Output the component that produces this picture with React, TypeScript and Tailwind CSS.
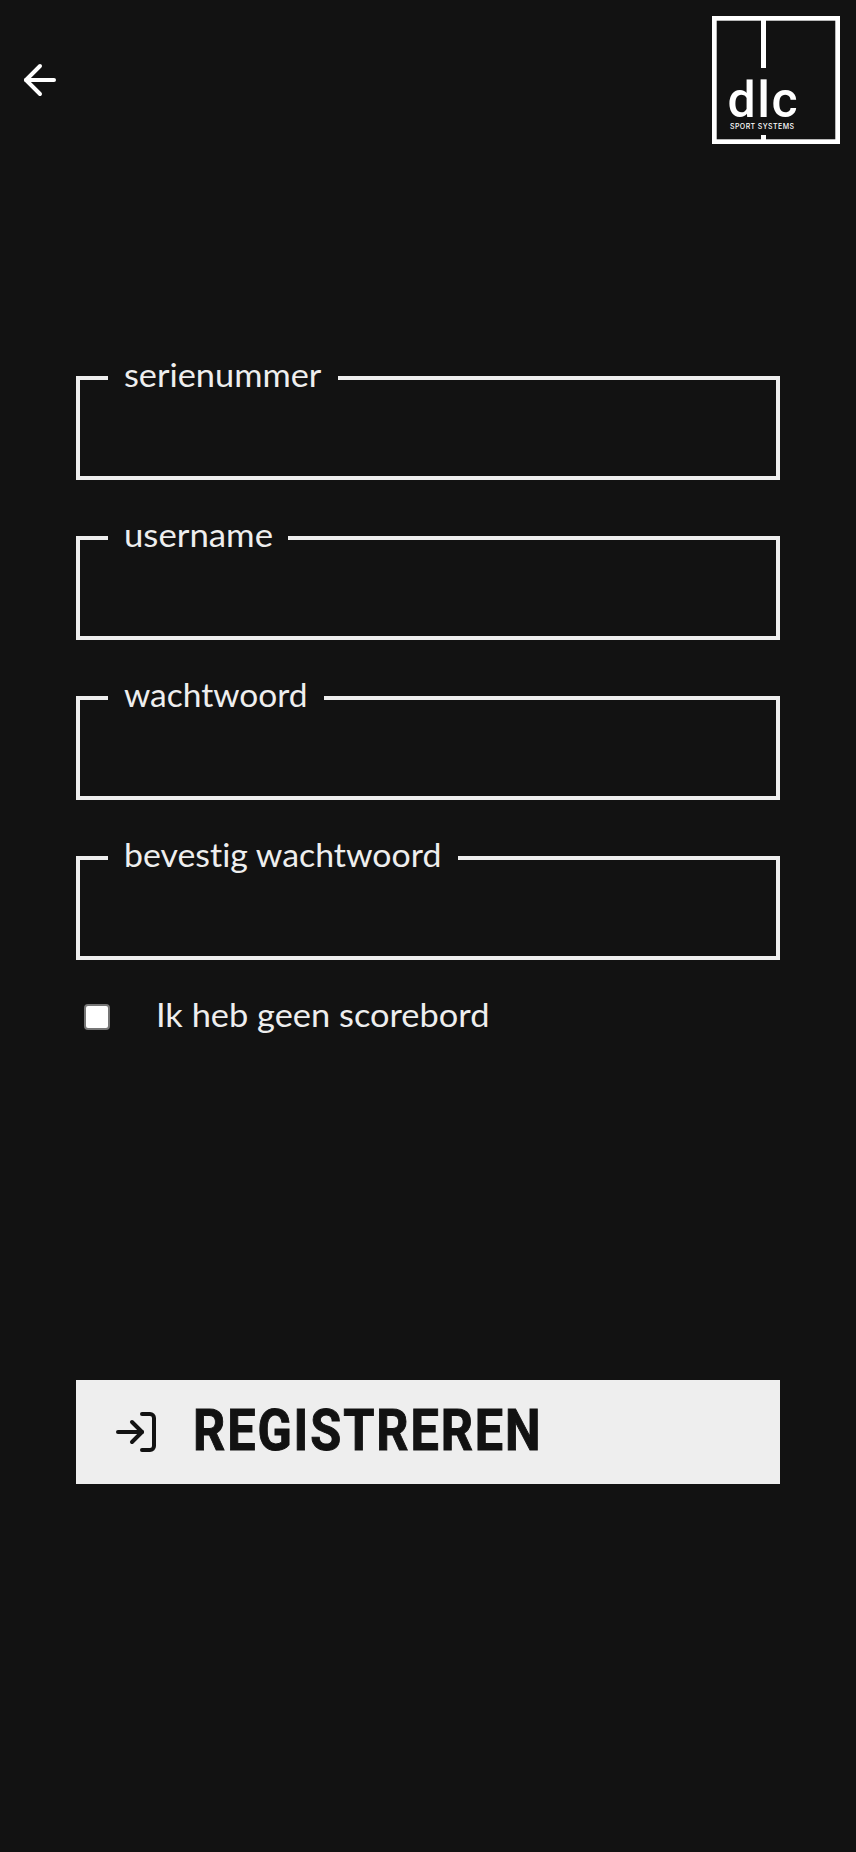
import { ArrowLeft, LogIn } from "lucide-react";

type Field = { id: string; label: string; type: string; width: string; stretch: string };

const fields: Field[] = [
  { id: "serial", label: "serienummer", type: "text", width: "w-[230px]", stretch: "scale-x-[1.073]" },
  { id: "username", label: "username", type: "text", width: "w-[180px]", stretch: "scale-x-[1.086]" },
  { id: "password", label: "wachtwoord", type: "password", width: "w-[216px]", stretch: "scale-x-[1.047]" },
  { id: "confirm", label: "bevestig wachtwoord", type: "password", width: "w-[350px]", stretch: "scale-x-[1.058]" },
];

function Logo() {
  return (
    <svg width="128" height="128" viewBox="0 0 128 128" fill="#fff" aria-label="dlc sport systems">
      <rect x="2.35" y="2.35" width="123.3" height="123.3" fill="none" stroke="#fff" strokeWidth="4.7" />
      <rect x="49" y="3" width="5" height="49" />
      <rect x="49" y="119" width="5" height="6" />
      <text x="15.4 45.3 59.6" y="101" fontFamily="Roboto" fontWeight="500" fontSize="50">dlc</text>
      <text x="18" y="112.8" fontFamily="Inter" fontWeight="500" fontSize="7" textLength="64">SPORT SYSTEMS</text>
    </svg>
  );
}

function OutlinedField({ field }: { field: Field }) {
  return (
    <div className="relative h-[104px] border-4 border-[#eeeeee]">
      <label
        htmlFor={field.id}
        className={`absolute -top-[29px] left-7 h-12 whitespace-nowrap bg-[#121212] px-4 text-[32px] leading-[48px] ${field.width}`}
      >
        <span className={`inline-block origin-left ${field.stretch}`}>{field.label}</span>
      </label>
      <input id={field.id} type={field.type} className="h-full w-full bg-transparent px-6 text-[32px] outline-none" />
    </div>
  );
}

export default function App() {
  return (
    <div className="flex h-[1852px] w-full flex-col bg-[#121212] font-['Lato',sans-serif] text-[#eeeeee] [font-variant-ligatures:none]">
      <header className="flex h-40 items-center justify-between px-4">
        <button type="button" aria-label="Terug" className="text-white">
          <ArrowLeft size={48} />
        </button>
        <Logo />
      </header>
      <form className="flex flex-col px-[76px] pt-[216px]">
        <div className="flex flex-col gap-14">
          {fields.map((field) => (
            <OutlinedField key={field.id} field={field} />
          ))}
        </div>
        <label className="mt-8 flex h-12 items-center pl-2 text-[32px] leading-[48px]">
          <input type="checkbox" className="mt-[2px] h-[26px] w-[26px] appearance-none rounded-[4px] border-2 border-[#767676] bg-white" />
          <span className="mb-[3px] ml-[46px] origin-left scale-x-[1.075] whitespace-nowrap">Ik heb geen scorebord</span>
        </label>
        <button type="button" className="mt-[340px] flex h-[104px] items-center bg-[#eeeeee] pl-9 text-[#121212]">
          <LogIn size={48} />
          <span className="mb-1 ml-[33px] origin-left scale-x-[0.868] whitespace-nowrap font-['Roboto',sans-serif] text-[58px] font-bold leading-none tracking-[2.2px] [-webkit-text-stroke:1px_#121212]">
            REGISTREREN
          </span>
        </button>
      </form>
    </div>
  );
}
